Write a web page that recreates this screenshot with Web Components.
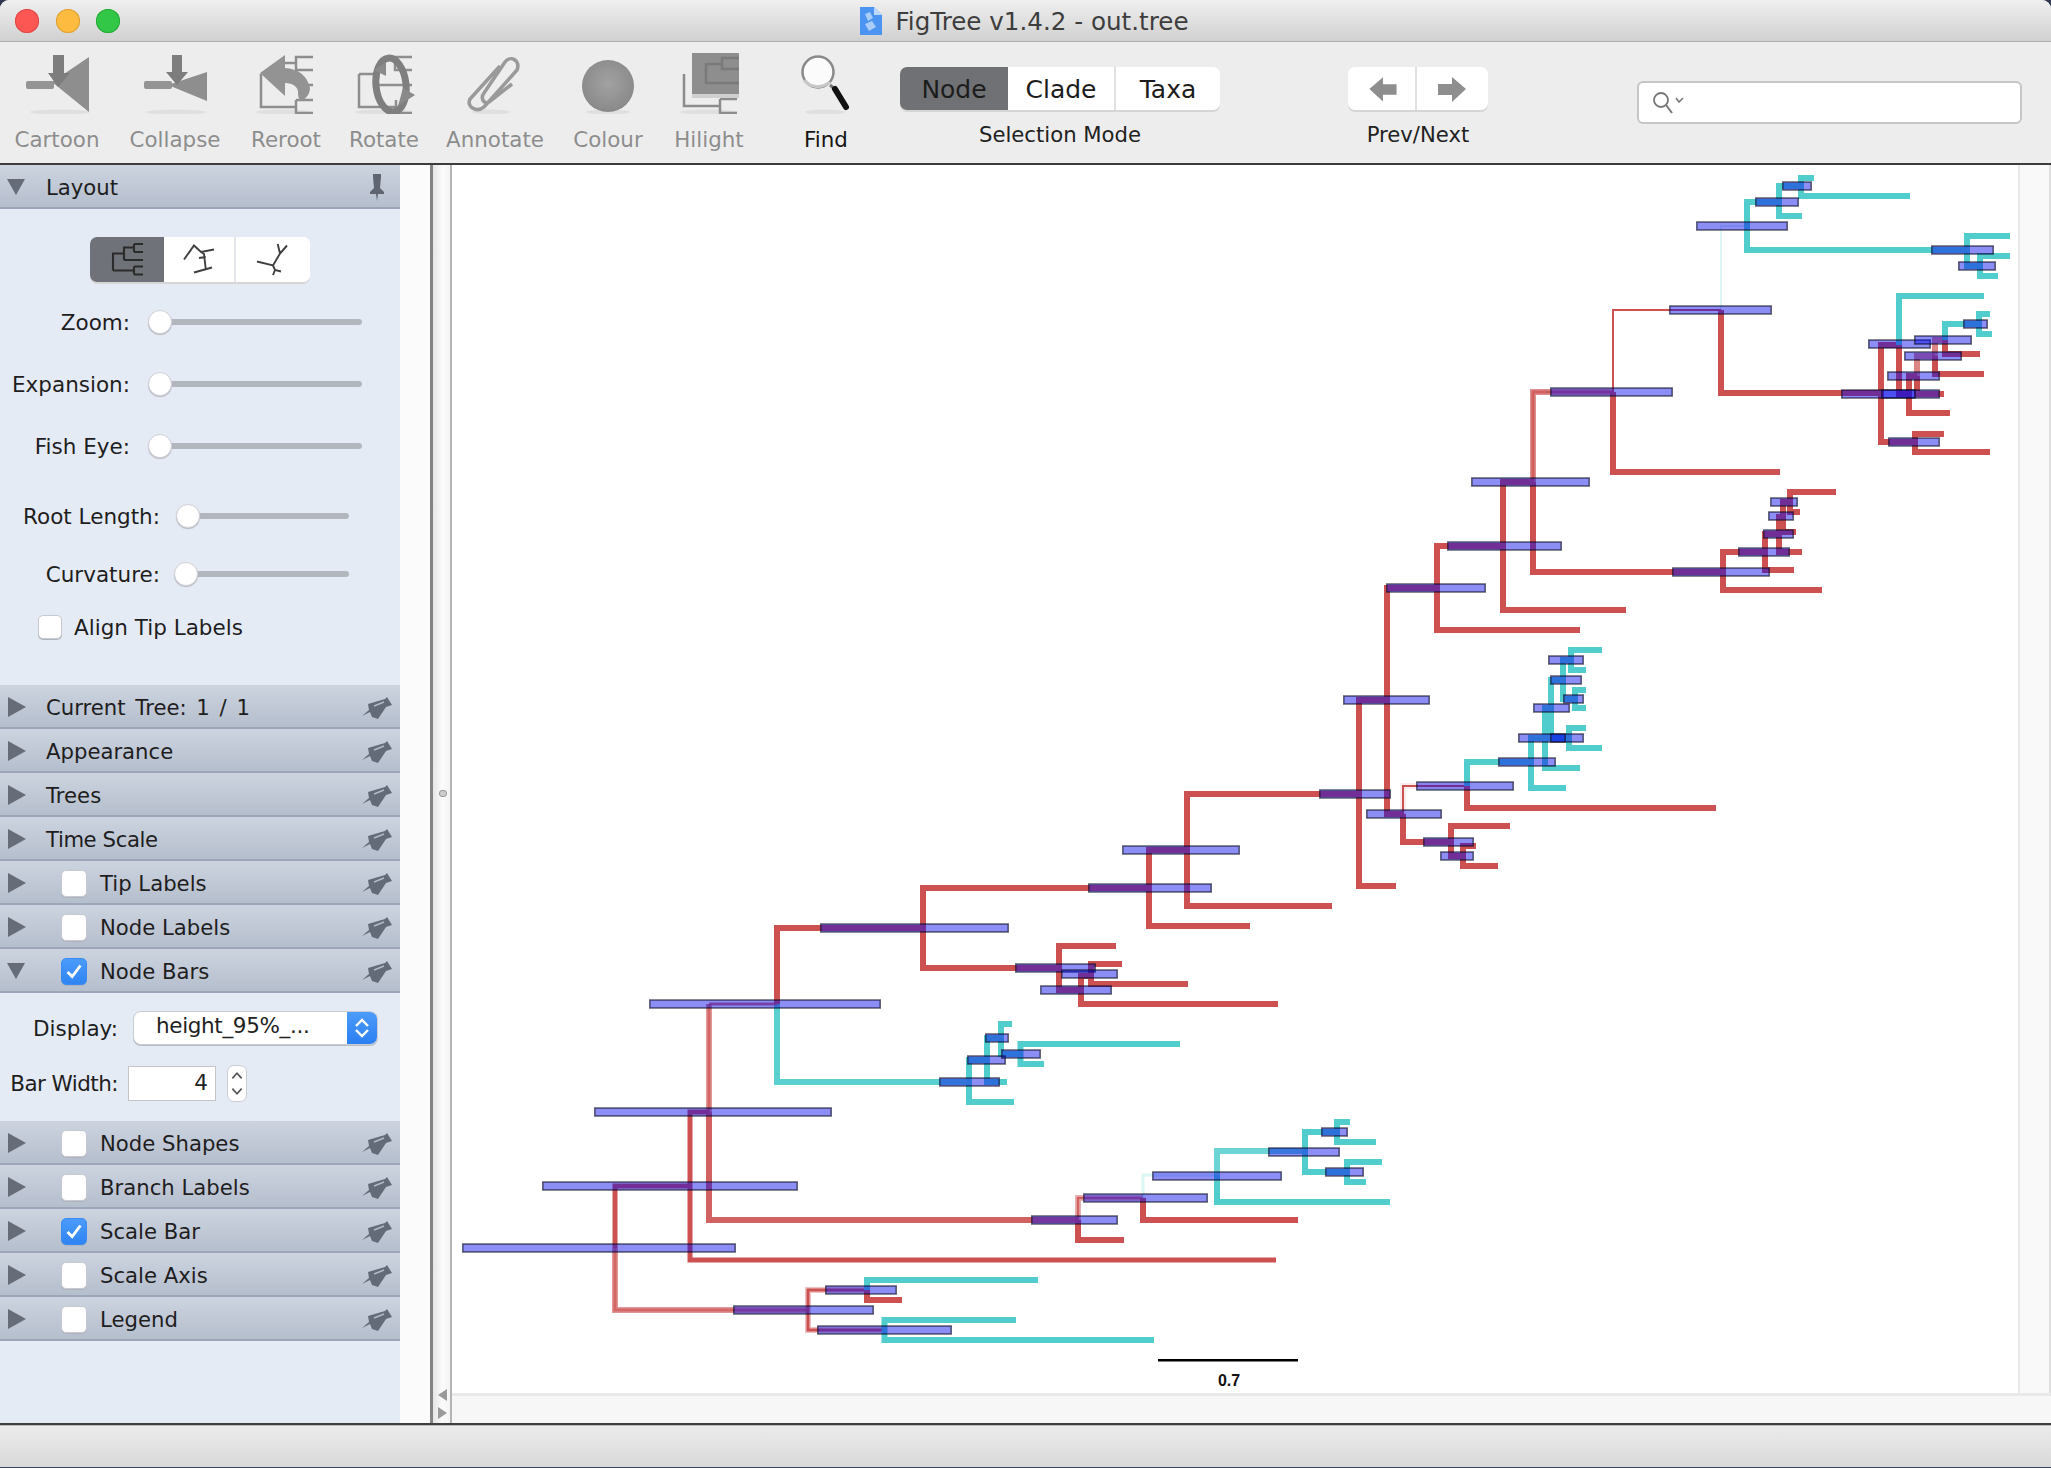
<!DOCTYPE html>
<html lang="en"><head><meta charset="utf-8"><title>FigTree</title>
<style>
html,body{margin:0;padding:0;background:#2f3850;overflow:hidden}
body{font-family:"DejaVu Sans",sans-serif;color:#1c1c1c}
</style></head><body>
<ft-window>
  <ft-titlebar slot="title">FigTree v1.4.2 - out.tree</ft-titlebar>
  <ft-toolbar slot="toolbar"></ft-toolbar>
  <ft-sidebar slot="side"></ft-sidebar>
  <ft-canvas slot="canvas"></ft-canvas>
</ft-window>
<script>
function def(name, css, html, init){
  customElements.define(name, class extends HTMLElement{
    constructor(){super();this.attachShadow({mode:'open'});}
    connectedCallback(){
      if(this._d)return;this._d=1;
      const h=typeof html==='function'?html(this):html;
      this.shadowRoot.innerHTML='<style>'+css+'</style>'+h;
      if(init)init(this);
    }
  });
}
const attr=(e,n,d='')=>e.hasAttribute(n)?e.getAttribute(n):d;

def('ft-window',`
:host{display:flex;flex-direction:column;width:2051px;height:1468px;box-sizing:border-box;border-radius:9px 9px 0 0;overflow:hidden;background:#ededed;border-bottom:1px solid #39435f}
.main{display:flex;height:1258px}
.status{flex:1;border-top:2px solid #3f3f3f;box-shadow:inset 0 1px 0 #bdbdbd;background:linear-gradient(#ececec,#d9d9d9)}
`,`<slot name="title"></slot><slot name="toolbar"></slot>
<div class="main"><slot name="side"></slot><slot name="canvas"></slot></div><div class="status"></div>`);

def('ft-titlebar',`
:host{display:flex;position:relative;align-items:center;justify-content:center;box-sizing:border-box;height:42px;flex:none;background:linear-gradient(#efefef,#d1d1d1);border-bottom:1px solid #aeaeae;font-size:24.6px;color:#3d3d3d;padding:2px 4px 0 0}
.lights{position:absolute;left:15px;top:9px;display:flex;gap:16.5px}
.lights i{display:block;width:24px;height:24px;border-radius:50%}
.doc{width:24px;height:30px;margin-right:12px;margin-top:-1px}
.t{display:flex;align-items:center;margin-left:1px}
`,`<div class="lights"><i style="background:#fc5753;box-shadow:inset 0 0 0 1px #df4744"></i><i style="background:#fdbc40;box-shadow:inset 0 0 0 1px #de9f34"></i><i style="background:#33c748;box-shadow:inset 0 0 0 1px #27aa35"></i></div>
<div class="t"><svg class="doc" viewBox="0 0 24 30"><path d="M1 1H15L23 9V29H1Z" fill="#4b94f2"/><path d="M15 1V9H23Z" fill="#bcd8fb"/><path d="M6 8 11 6 14 12 9 15ZM6 18 13 15 17 21 10 25Z" fill="#a9ccf8"/></svg><slot></slot></div>`);

const G='#8e8e8e';
const SH=(x1,x2)=>`<ellipse cx="${(x1+x2)/2}" cy="112" rx="${(x2-x1)/2}" ry="2.5" fill="#dfdfdf"/>`;
const ICONS={
Cartoon:`22 50 70 64`,Collapse:`140 50 70 64`,Reroot:`251 50 70 64`,Rotate:`349 50 70 64`,Annotate:`460 50 70 64`,Colour:`573 50 70 64`,Hilight:`674 50 70 64`,Find:`791 50 70 64`};
const ICONB={
Cartoon:SH(30,90)+`<path d="M52 82 89 57V112Z" fill="${G}"/><rect x="26" y="81" width="28" height="8" rx="2" fill="#949494"/><path d="M53 55H64V73H70L58 87 48 73H53Z" fill="#7d7d7d"/>`,
Collapse:SH(146,206)+`<path d="M168 85 207 72V101Z" fill="${G}"/><rect x="144" y="81" width="28" height="8" rx="2" fill="#949494"/><path d="M172 55H182V72H188L177 85 166 72H172Z" fill="#7d7d7d"/>`,
Reroot:SH(256,312)+`<g fill="none" stroke="${G}" stroke-width="2.5"><path d="M313 57H296V70H313M296 63H284M261 74V107H296M296 100V113H313M296 100H313M300 85H313"/></g><path d="M260 73 285 55V68C298 69 307 75 310 88 310 94 306 99 301 101 299 99 298 97 298 92 298 87 293 83 285 83V96Z" fill="#939393"/>`,
Rotate:SH(355,412)+`<g fill="none" stroke="${G}" stroke-width="2.5"><path d="M412 57H395V70H412M359 74V107H396M396 100V113H412M359 74H374M378 85H412"/></g><ellipse cx="391" cy="85" rx="15" ry="27" transform="rotate(-6 391 85)" fill="none" stroke="#7f7f7f" stroke-width="7"/><path d="M398 106 415 95 403 88Z" fill="#8a8a8a"/><path d="M374 70 386 62V76Z" fill="#8a8a8a"/>`,
Annotate:SH(472,510)+`<path d="M512 84 489 102C484 105 480 98 484 93L505 62C510 55 521 60 517 70L484 107C477 113 466 107 470 99L500 66" fill="none" stroke="#9a9a9a" stroke-width="3.6"/>`,
Colour:`<defs><radialGradient id="cg" cx=".5" cy=".45" r=".6"><stop offset="0" stop-color="#a2a2a2"/><stop offset="1" stop-color="#878787"/></radialGradient></defs>`+SH(586,630)+`<circle cx="608" cy="86" r="26" fill="url(#cg)"/>`,
Hilight:SH(680,738)+`<g fill="none" stroke="#8c8c8c" stroke-width="2.5"><path d="M684 74V106H720M720 99V113H737M720 99H737"/></g><rect x="692" y="53" width="47" height="41" fill="#8e8e8e"/><rect x="692" y="94" width="47" height="4" fill="#cfcfcf"/><g fill="none" stroke="#7a7a7a" stroke-width="2.5"><path d="M739 58H722V69H739M722 64H706V83H739"/></g>`,
Find:SH(805,845)+`<circle cx="818" cy="72" r="15.5" fill="#fbfbfb" stroke="#8a8a8a" stroke-width="2.5"/><path d="M804 80C808 86 820 90 830 82" fill="none" stroke="#c8c8c8" stroke-width="3"/><path d="M830 85 836 90" stroke="#777" stroke-width="3"/><path d="M835 89 846 107" stroke="#111" stroke-width="6" stroke-linecap="round"/>`};

def('ft-tool',`
:host{display:flex;flex:none;flex-direction:column;align-items:center;box-sizing:border-box;padding-top:8px;font-size:21.4px;color:#8d8d8d;line-height:26px;white-space:nowrap}
:host([on]){color:#151515}
svg{display:block;width:70px;height:64px;margin-bottom:13px}
`,e=>{const n=attr(e,'name');return `<svg viewBox="${ICONS[n]}">${ICONB[n]}</svg><span>${n}</span>`});

def('ft-seg',`
:host{display:inline-flex;height:43px;border-radius:7px;background:#fff;box-shadow:0 2px 0 #d6d6d6;flex:none;overflow:hidden}
`,`<slot></slot>`);
def('ft-seg-item',`
:host{display:flex;align-items:center;justify-content:center;box-sizing:border-box;border-right:2px solid #e1e1e1;font-size:25px;color:#1c1c1c;padding-top:2px}
:host(:last-child){border-right:0}
:host([on]){background:#6f7174;border-right:0}
`,`<slot></slot>`);

def('ft-group',`
:host{display:flex;flex-direction:column;align-items:center;flex:none;padding-top:25px;box-sizing:border-box}
.l{font-size:21.2px;line-height:26px;margin-top:12px;color:#222;white-space:nowrap}
`,e=>`<slot></slot><div class="l">${attr(e,'label')}</div>`);

def('ft-search',`
:host{display:flex;align-items:center;flex:none;box-sizing:border-box;width:385px;height:43px;margin-top:39px;background:#fff;border:2px solid #c6c6c6;border-radius:6px;padding-left:13px}
svg{width:36px;height:26px}
`,`<svg viewBox="0 0 36 26"><circle cx="9" cy="10" r="7" fill="none" stroke="#777" stroke-width="1.8"/><path d="M14 15 20 23" stroke="#777" stroke-width="2"/><path d="M24 8 27 12 31 8" fill="none" stroke="#777" stroke-width="1.6"/></svg>`);

def('ft-toolbar',`
:host{display:flex;box-sizing:border-box;height:123px;flex:none;background:#ededed;border-bottom:2px solid #3c3c3c}
.sel{margin-left:8px;width:320px}
.pn{margin-left:128px;width:140px}
.s{margin-left:149px}
svg{display:block;width:100%;height:100%}
`,`
<ft-tool name="Cartoon" style="width:114px"></ft-tool>
<ft-tool name="Collapse" style="width:122px"></ft-tool>
<ft-tool name="Reroot" style="width:100px"></ft-tool>
<ft-tool name="Rotate" style="width:96px"></ft-tool>
<ft-tool name="Annotate" style="width:126px"></ft-tool>
<ft-tool name="Colour" style="width:100px"></ft-tool>
<ft-tool name="Hilight" style="width:102px"></ft-tool>
<ft-tool name="Find" on style="width:132px"></ft-tool>
<ft-group class="sel" label="Selection Mode"><ft-seg><ft-seg-item on style="width:108px">Node</ft-seg-item><ft-seg-item style="width:108px">Clade</ft-seg-item><ft-seg-item style="width:104px">Taxa</ft-seg-item></ft-seg></ft-group>
<ft-group class="pn" label="Prev/Next"><ft-seg><ft-seg-item style="width:69px;padding-top:0"><svg viewBox="0 0 69 43"><path d="M22 22 36 10V17H50V28H36V35Z" fill="#8e8e8e"/></svg></ft-seg-item><ft-seg-item style="width:71px;padding-top:0"><svg viewBox="0 0 71 43"><path d="M49 22 35 10V17H21V28H35V35Z" fill="#8e8e8e"/></svg></ft-seg-item></ft-seg></ft-group>
<ft-search class="s"></ft-search>`);

const PIN=`<path d="M0 21 7 15 6 9 23 4 25 2 30 10 24 12 16 24 10 22 8 17Z" fill="#646b78"/><path d="M12 11 22 7" stroke="#b4bbc8" stroke-width="1.5"/>`;
def('ft-check',`
:host{display:block;flex:none;box-sizing:border-box;width:26px;height:27px;background:#fff;border:1.5px solid #c6c9cf;border-radius:5px;box-shadow:0 1px 0 #aeb4bf}
:host([on]){background:linear-gradient(#4a9bfa,#2f84f3);border-color:#3a8bf3}
svg{display:block;width:100%;height:100%}
`,e=>e.hasAttribute('on')?`<svg viewBox="0 0 26 27"><path d="M6 14 11 19 20 7" fill="none" stroke="#fff" stroke-width="3"/></svg>`:'');

def('ft-header',`
:host{display:flex;align-items:center;box-sizing:border-box;height:44px;flex:none;background:linear-gradient(#cdd4e0,#b5becd);border-bottom:2px solid #9ca6b8;font-size:21.2px;color:#1e1e1e;white-space:nowrap;padding:2px 0 0 8px}
.tri{width:18px;height:20px;flex:none;margin-right:20px}
:host([open]) .tri{margin-left:-1px;margin-right:21px}
ft-check{margin:0 13px 0 15px}
.sp{flex:1}
.pin{width:30px;height:24px;margin-right:8px;flex:none}
.vpin{width:16px;height:28px;margin-right:15px;flex:none}
`,e=>{
 const open=e.hasAttribute('open');
 const tri=open?`<svg class="tri" viewBox="0 0 18 20"><path d="M0 2H18L9 18Z" fill="#666c78"/></svg>`:`<svg class="tri" viewBox="0 0 18 20"><path d="M0 0V20L18 10Z" fill="#666c78"/></svg>`;
 const chk=e.hasAttribute('check')?`<ft-check ${attr(e,'check')==='on'?'on':''}></ft-check>`:'';
 const pin=e.hasAttribute('vpin')?`<svg class="vpin" viewBox="0 0 16 28"><path d="M4 1H12V4L11 15 15 19V21H9L8 28 7 21H1V19L5 15 4 4Z" fill="#5f6571"/></svg>`:`<svg class="pin" viewBox="0 0 30 24">${PIN}</svg>`;
 return tri+chk+`<slot></slot><span class="sp"></span>`+pin;
});

def('ft-slider',`
:host{display:flex;align-items:center;height:30px;font-size:21.5px;color:#1e1e1e;white-space:nowrap;flex:none}
.l{text-align:right;flex:none}
.w{position:relative;height:30px;flex:none}
.tr{position:absolute;left:10px;right:0;top:12px;height:6px;background:#b2b6bd;border-radius:3px}
.th{position:absolute;left:0;top:3px;width:24px;height:24px;box-sizing:border-box;border-radius:50%;background:#fff;border:1.5px solid #cfd1d6;box-shadow:0 1px 1px #b5b8bf}
`,e=>`<div class="l" style="width:${attr(e,'lw')}px">${attr(e,'label')}</div><div class="w" style="margin-left:${attr(e,'gap')}px;width:${attr(e,'w')}px"><div class="tr"></div><div class="th"></div></div>`);

def('ft-seg-icon',`:host{display:flex;align-items:center;justify-content:center;box-sizing:border-box;height:100%;border-right:2px solid #e3e6ea;background:#fff}
:host(:last-child){border-right:0}:host([on]){background:#6f7278;border-right:0}svg{width:36px;height:36px}`,
e=>{const k=attr(e,'k');const s='fill="none" stroke="#3f3f3f" stroke-width="1.9"';
 const P={a:`<path d="M4 28.500V11.500H15M15 18V5.500H25M25 2V10M25 2H34M25 10H34M15 18H34M4 28.500H25M25 24.500V32.500M25 24.500H34M25 32.500H34" fill="none" stroke="#2b2b2b" stroke-width="2.1"/>`,
 b:`<path d="M3 17.500 13 3.500 20 10 33 7.500M20 10 23 12 24.700 26.500M31 25.500 13 30.500M18 16 24.700 15M10 8 7 12" ${s}/>`,
 c:`<path d="M2 19.500 18 23.500 25 11.500 32 3.500M25 11.500 22.700 2M18 23.500 20 28 26 29.500M20 28 18 33" ${s}/>`};
 return `<svg viewBox="0 0 36 36">${P[k]}</svg>`});

def('ft-select',`
:host{display:flex;box-sizing:border-box;width:245px;height:34px;margin-left:15px;background:#fff;border:1.5px solid #c9ccd2;border-radius:8px;overflow:hidden;flex:none;box-shadow:0 1px 0 #b9bdc5}
.t{flex:1;padding-left:22px;font-size:21.5px;line-height:28px;color:#222;white-space:nowrap;letter-spacing:-.35px}
.b{width:30px;background:linear-gradient(#4d9cfa,#2a7ff2);display:flex;align-items:center;justify-content:center}
svg{width:16px;height:24px}
`,`<div class="t"><slot></slot></div><div class="b"><svg viewBox="0 0 16 24"><path d="M2 10 8 4 14 10M2 14 8 20 14 14" fill="none" stroke="#fff" stroke-width="2.4"/></svg></div>`);

def('ft-num',`
:host{display:flex;align-items:center;flex:none;margin-left:10px}
.i{box-sizing:border-box;width:88px;height:35px;background:#fff;border:1.5px solid #c2c5cb;font-size:21.5px;line-height:32px;text-align:right;padding-right:7px;color:#222}
.s{margin-left:11px;width:20px;height:37px;box-sizing:border-box;border:1.5px solid #ccced3;border-radius:7px;background:#fff}
svg{display:block;width:100%;height:100%}
`,`<div class="i"><slot></slot></div><div class="s"><svg viewBox="0 0 17 34"><path d="M4 12 8.500 7 13 12M4 22 8.500 27 13 22" fill="none" stroke="#555" stroke-width="1.6"/></svg></div>`);

def('ft-sidebar',`
:host{display:flex;flex:none;width:452px;height:1258px}
.p{width:400px;background:#e5ebf5;display:flex;flex-direction:column}
.strip{width:30px;background:#fbfbfb;border-left:0}
.gut{position:relative;box-sizing:border-box;width:22px;border-left:3px solid #858585;border-right:2px solid #b4b4b4;background:linear-gradient(90deg,#e6e6e6,#fbfbfb 55%,#f4f4f4)}
.dot{position:absolute;left:6px;top:625px;width:6px;height:5px;border:1px solid #999;border-radius:3px;background:#ccc}
.gut svg{position:absolute;left:3px;top:1223px;width:12px;height:32px}
.lb{height:476px;box-sizing:border-box;padding-top:28px;flex:none;font-size:21.5px;color:#1e1e1e}
.segw{display:flex;justify-content:center}
.bb{height:128px;flex:none;box-sizing:border-box;font-size:21.5px;color:#1e1e1e;white-space:nowrap}
.r{display:flex;align-items:center}
.lbl{text-align:right;flex:none}
.al{display:flex;align-items:center;height:30px;margin-top:23px;padding-left:38px}
.al ft-check{width:24px;height:24px;margin-right:12px}
`,`<div class="p">
<ft-header vpin open>Layout</ft-header>
<div class="lb">
 <div class="segw"><ft-seg style="width:220px;height:45px"><ft-seg-icon k="a" on style="width:74px"></ft-seg-icon><ft-seg-icon k="b" style="width:72px"></ft-seg-icon><ft-seg-icon k="c" style="width:74px"></ft-seg-icon></ft-seg></div>
 <ft-slider label="Zoom:" lw="130" gap="18" w="214" style="margin-top:25px"></ft-slider>
 <ft-slider label="Expansion:" lw="130" gap="18" w="214" style="margin-top:32px"></ft-slider>
 <ft-slider label="Fish Eye:" lw="130" gap="18" w="214" style="margin-top:32px"></ft-slider>
 <ft-slider label="Root Length:" lw="160" gap="16" w="173" style="margin-top:40px"></ft-slider>
 <ft-slider label="Curvature:" lw="160" gap="14" w="175" style="margin-top:28px"></ft-slider>
 <div class="al"><ft-check></ft-check>Align Tip Labels</div>
</div>
<ft-header style="word-spacing:3px">Current Tree: 1 / 1</ft-header>
<ft-header>Appearance</ft-header>
<ft-header>Trees</ft-header>
<ft-header style="letter-spacing:-.4px">Time Scale</ft-header>
<ft-header check>Tip Labels</ft-header>
<ft-header check>Node Labels</ft-header>
<ft-header check="on" open>Node Bars</ft-header>
<div class="bb">
 <div class="r" style="margin-top:18px;height:34px"><div class="lbl" style="width:118px">Display:</div><ft-select>height_95%_...</ft-select></div>
 <div class="r" style="margin-top:21px;height:35px"><div class="lbl" style="width:118px;letter-spacing:-.55px">Bar Width:</div><ft-num>4</ft-num></div>
</div>
<ft-header check>Node Shapes</ft-header>
<ft-header check>Branch Labels</ft-header>
<ft-header check="on">Scale Bar</ft-header>
<ft-header check>Scale Axis</ft-header>
<ft-header check>Legend</ft-header>
</div>
<div class="strip"></div>
<div class="gut"><div class="dot"></div><svg viewBox="0 0 12 32"><path d="M11 1V13L2 7ZM2 19V31L11 25Z" fill="#9a9a9a"/></svg></div>`);

def('ft-canvas',`
:host{display:flex;flex-direction:column;flex:1;min-width:0}
.top{display:flex;height:1228px;flex:none}
.c{width:1566px;height:1228px;background:#fff;flex:none}
.rt{flex:1;background:#f9f9f9;border-left:2px solid #e9e9e9;border-right:2px solid #dedede}
.bt{flex:1;background:#f7f7f7;border-top:3px solid #e9e9e9}
svg{display:block}
`,`<div class="top"><div class="c"><ft-tree></ft-tree></div><div class="rt"></div></div><div class="bt"></div>`);

const R='#cd5151',C='#52cdcd';
const BR=[
[C,6,1,"M1814 178H1801V196H1910"],[C,6,1,"M1802 216H1779V186H1801"],[C,6,1,"M1779 202H1747V250H1967"],
[C,6,1,"M2010 236H1967V266H1980"],[C,6,1,"M2010 256H1980V276H1998"],[C,2,.2,"M1747 226H1721V310"],
[R,6,1,"M1721 310V393H1881"],[R,2,1,"M1721 310H1613V392"],[R,6,1,"M1613 392V472H1780"],
[R,6,1,"M1899 345H1881V442H1915"],[R,6,1,"M1944 434H1915V452H1990"],[C,6,1,"M1984 296H1899V345"],[R,6,1,"M1899 345V394H1909"],
[R,6,1,"M1917 376H1909V413H1950"],[R,6,.7,"M1917 376V356H1935"],[R,6,1,"M1917 376V394H1944"],
[R,6,.7,"M1935 356V340H1945"],[R,6,1,"M1935 356V374H1984"],[R,6,1,"M1945 340V354H1980"],[C,6,1,"M1945 340V324H1979"],[C,6,1,"M1990 314H1979V334H1992"],
[R,6,.65,"M1613 392H1533V482"],[R,3,.8,"M1613 392H1533V482"],[R,6,1,"M1533 482V572H1723"],
[R,6,1,"M1822 590H1723V552H1765"],[R,6,1,"M1794 570H1765V534H1779"],[R,6,1,"M1802 552H1779V517H1783"],[R,6,1,"M1796 532H1783V502H1790"],[R,6,1,"M1836 492H1790V512H1800"],
[R,6,1,"M1533 482H1503V610H1626"],[R,6,1,"M1503 546H1437V630H1580"],[R,6,1,"M1437 588H1387V814H1403"],[R,6,1,"M1403 814V842H1451"],
[R,6,1,"M1510 826H1451V856H1463"],[R,6,1,"M1476 846H1463V866H1498"],[R,6,.1,"M1403 814V786H1467"],[R,2,1,"M1403 814V786H1467"],
[R,6,1,"M1467 786V808H1716"],[C,6,1,"M1467 786V762H1531"],[C,6,1,"M1566 788H1531V738H1545"],[C,6,1,"M1580 768H1545V708H1551"],[C,6,1,"M1569 738H1551V680H1563"],
[C,6,1,"M1586 728H1569V748H1602"],[C,6,1,"M1563 680V660H1571"],[C,6,1,"M1602 650H1571V670H1586"],[C,6,1,"M1563 680V699H1575"],[C,6,1,"M1586 690H1575V708H1586"],
[R,6,1,"M1396 886H1359V700H1387"],[R,6,1,"M1359 794H1187V906H1332"],[R,6,1,"M1187 850H1149V926H1250"],
[R,6,1,"M1149 888H923V968H1059"],[R,6,1,"M1116 946H1059V990H1081"],[R,6,1,"M1091 976H1081V1004H1278"],[R,6,1,"M1122 964H1091V984H1188"],
[R,6,1,"M923 928H777V1004"],[C,6,.95,"M777 1004V1082H969"],[C,6,1,"M1014 1102H969V1060H987"],[C,6,1,"M1007 1082H987V1038H1001"],[C,6,1,"M1012 1024H1001V1054H1020.500"],[C,6,1,"M1180 1044H1020.500V1064H1044"],
[R,3,.8,"M777 1004H709"],[R,6,.6,"M709 1004V1112"],[R,3,.7,"M709 1004V1112"],[R,6,.9,"M709 1112V1220H1078"],[R,5,1,"M709 1112H690V1260H1276"],
[R,5,1,"M690 1186H615V1248"],[R,6,.6,"M615 1248V1310H808"],[R,3,.7,"M615 1248V1310H808"],[R,6,.35,"M867 1290H808V1330H884"],[R,3,1,"M867 1290H808V1330H884"],
[C,6,1,"M1038 1280H867V1290"],[R,6,1,"M867 1290V1300H902"],[C,6,1,"M1016 1320H884.500V1340H1154"],
[R,6,.45,"M1078 1220V1198H1143"],[R,2.5,.8,"M1078 1220V1198H1143"],[R,6,1,"M1078 1220V1240H1124"],[R,6,1,"M1143 1198V1220H1298"],[C,3,.2,"M1143 1198V1175H1217"],
[C,6,.85,"M1217 1175V1151H1305"],[C,6,1,"M1217 1175V1202H1390"],[C,6,1,"M1337 1132H1305V1172H1347"],[C,6,1,"M1350 1122H1337V1142H1376"],[C,6,1,"M1382 1162H1347V1182H1366"]
];
const BA=[
[1782,1812,186],[1755,1799,202],[1696,1788,226],[1931,1994,250],[1958,1996,266],[1669,1772,310],[1550,1673,392],[1963,1988,324],[1868,1931,344],[1914,1972,340],[1904,1962,356],[1887,1940,376],[1841,1940,394],[1881,1916,394],[1888,1940,442],
[1471,1590,482],[1447,1562,546],[1386,1486,588],[1343,1430,700],[1319,1391,794],[1366,1442,814],[1423,1474,842],[1440,1474,856],[1416,1514,786],[1498,1556,762],[1518,1584,738],[1550,1566,738],[1533,1570,708],[1550,1582,680],[1548,1584,660],[1563,1584,699],
[1770,1798,502],[1768,1794,516],[1763,1794,534],[1738,1790,552],[1672,1770,572],
[1122,1240,850],[1088,1212,888],[820,1009,928],[1015,1096,968],[1061,1118,974],[1040,1112,990],[649,881,1004],[939,1000,1082],[967,1006,1060],[985,1009,1038],[1001,1041,1054],
[594,832,1112],[542,798,1186],[462,736,1248],[733,874,1310],[825,897,1290],[817,952,1330],
[1031,1118,1220],[1083,1208,1198],[1152,1282,1176],[1268,1340,1152],[1321,1348,1132],[1325,1364,1172]
];
def('ft-tree',`:host{display:block;width:1566px;height:1228px}svg{display:block;width:100%;height:100%}text{font-family:"Liberation Sans",sans-serif;font-weight:700;font-size:16px;fill:#111}`,
()=>{
 let s='<svg viewBox="452 165 1566 1228">';
 for(const b of BR) s+=`<path d="${b[3]}" fill="none" stroke="${b[0]}" stroke-width="${b[1]}" stroke-opacity="${b[2]}" stroke-miterlimit="4"/>`;
 for(const b of BA) s+=`<rect x="${b[0]+.8}" y="${b[2]-4}" width="${b[1]-b[0]-1.6}" height="8" fill="rgba(0,5,235,.45)" stroke="rgba(10,10,30,.6)" stroke-width="1.6"/>`;
 s+=`<rect x="1158" y="1359" width="140" height="2.500" fill="#000"/><text x="1229" y="1386" text-anchor="middle">0.7</text></svg>`;
 return s;
});
</script>
</body></html>
